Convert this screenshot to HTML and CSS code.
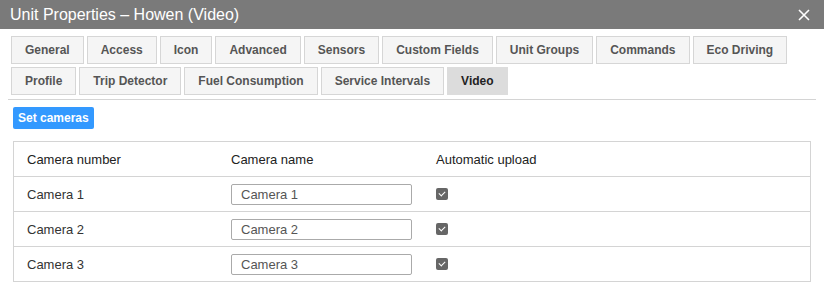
FILE: index.html
```html
<!DOCTYPE html>
<html lang="en">
<head>
  <meta charset="UTF-8">
  <title>Unit Properties</title>
  <link rel="stylesheet" href="styles.css">
</head>
<body>
  <header class="titlebar">
    <span class="title">Unit Properties – Howen (Video)</span>
    <button class="close" aria-label="Close">
      <svg width="12" height="12" viewBox="0 0 12 12"><path d="M1 1L11 11M11 1L1 11" stroke="#fff" stroke-width="1.6" fill="none"/></svg>
    </button>
  </header>
  <div class="content">
    <div class="tabs">
      <div class="tab">General</div>
      <div class="tab">Access</div>
      <div class="tab">Icon</div>
      <div class="tab">Advanced</div>
      <div class="tab">Sensors</div>
      <div class="tab">Custom Fields</div>
      <div class="tab">Unit Groups</div>
      <div class="tab">Commands</div>
      <div class="tab">Eco Driving</div>
      <div class="tab">Profile</div>
      <div class="tab">Trip Detector</div>
      <div class="tab">Fuel Consumption</div>
      <div class="tab">Service Intervals</div>
      <div class="tab active">Video</div>
    </div>
    <div class="panel">
      <button class="btn-primary">Set cameras</button>
      <table class="cams">
        <thead>
          <tr><th class="c1">Camera number</th><th class="c2">Camera name</th><th>Automatic upload</th></tr>
        </thead>
        <tbody>
          <tr><td>Camera 1</td><td><input type="text" value="Camera 1"></td><td><span class="check"></span></td></tr>
          <tr><td>Camera 2</td><td><input type="text" value="Camera 2"></td><td><span class="check"></span></td></tr>
          <tr><td>Camera 3</td><td><input type="text" value="Camera 3"></td><td><span class="check"></span></td></tr>
        </tbody>
      </table>
    </div>
  </div>
</body>
</html>
```
FILE: styles.css
```css
body { margin: 0; font-family: "Liberation Sans", Arial, sans-serif; font-size: 13px; color: #333; background: #fff; }
.titlebar { height: 29px; background: #7a7a7a; color: #fff; display: flex; align-items: center; justify-content: space-between; padding: 0 10px; }
.title { font-size: 16px; }
.close { background: none; border: 0; padding: 0; width: 14px; height: 14px; display: flex; align-items: center; justify-content: center; cursor: pointer; margin-right: 3px; }
.tabs { margin: 0 8px; padding: 7px 3px 4px; display: flex; flex-wrap: wrap; gap: 3px; border-bottom: 1px solid #d4d4d4; }
.tab { height: 26px; line-height: 26px; padding: 0 13px; border: 1px solid #d6d6d6; background: #f5f5f5; color: #555; font-size: 12px; font-weight: bold; cursor: pointer; }
.tab.active { background: #dcdcdc; border-color: #dcdcdc; color: #222; }
.panel { padding: 7px 13px 0; }
.btn-primary { display: block; height: 22px; padding: 0 5px; border: 0; border-radius: 2px; background: #3399ff; color: #fff; font-family: inherit; font-size: 12px; font-weight: bold; cursor: pointer; }
.cams { width: 100%; margin-top: 12px; border-collapse: collapse; border: 1px solid #d4d4d4; }
.cams th, .cams td { height: 34px; padding: 0 0 0 13px; text-align: left; font-weight: normal; border-bottom: 1px solid #d4d4d4; vertical-align: middle; }
.cams th { color: #222; }
.cams .c1 { width: 191px; }
.cams .c2 { width: 192px; }
.cams input { width: 181px; height: 21px; box-sizing: border-box; border: 1px solid #aaa; border-radius: 2px; padding: 0 9px; font-family: inherit; font-size: 13px; color: #555; display: block; }
.check { display: block; width: 12px; height: 12px; border-radius: 2px; background: #666; position: relative; }
.check::after { content: ""; position: absolute; left: 4px; top: 2px; width: 3px; height: 5px; border: solid #fff; border-width: 0 1.5px 1.5px 0; transform: rotate(45deg); }
```
